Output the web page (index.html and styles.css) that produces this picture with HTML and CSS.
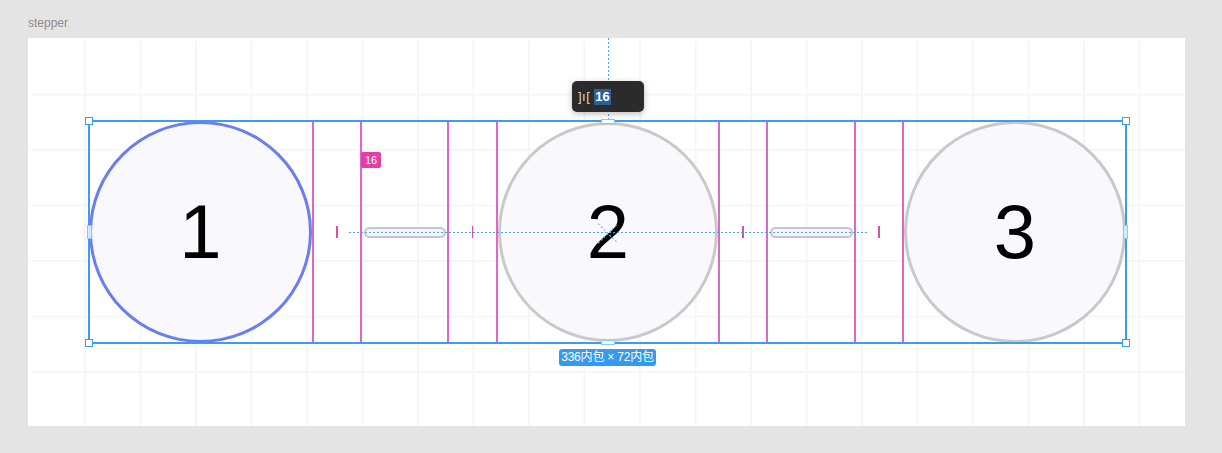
FILE: index.html
```html
<!DOCTYPE html>
<html lang="zh">
<head>
<meta charset="utf-8">
<title>stepper</title>
<link rel="stylesheet" href="styles.css">
</head>
<body>
<div class="frame-label">stepper</div>
<div class="canvas">
  <div class="guide-v"></div>
  <div class="tooltip"><span class="tip-icon">]ı[</span><span class="tip-val">16</span></div>
  <div class="stepper">
    <div class="step active s1"><span>1</span></div>
    <div class="gap g50"><i class="tick"></i></div>
    <div class="conn c85"><div class="pill"></div></div>
    <div class="gap g51"><i class="tick"></i></div>
    <div class="step s2"><span>2</span></div>
    <div class="gap g50"><i class="tick"></i></div>
    <div class="conn c86"><div class="pill"></div></div>
    <div class="gap g50"><i class="tick"></i></div>
    <div class="step s3"><span>3</span></div>

    <div class="guide-h"></div>
    <div class="cross"><i class="d1"></i><i class="d2"></i></div>
    <div class="badge-pink">16</div>
    <div class="selection">
      <i class="h tl"></i><i class="h tr"></i><i class="h bl"></i><i class="h br"></i>
      <i class="m mt"></i><i class="m mb"></i><i class="m ml"></i><i class="m mr"></i>
    </div>
    <div class="size-label">336内包 × 72内包</div>
  </div>
</div>
</body>
</html>
```
FILE: styles.css
```css
* { box-sizing: border-box; }
html, body { margin: 0; padding: 0; }
body {
  background: #e4e4e4;
  width: 1222px;
  height: 453px;
  font-family: "Liberation Sans", Arial, sans-serif;
  overflow: hidden;
}
.frame-label {
  height: 38px;
  padding: 16px 0 0 28px;
  font-size: 12px;
  line-height: 14px;
  color: #8d8d8d;
}
.canvas {
  position: relative;
  margin-left: 28px;
  width: 1157px;
  height: 388px;
  background-color: #ffffff;
  background-image:
    linear-gradient(to right, transparent 0 calc(100% - 2px), #f6f6f6 calc(100% - 2px)),
    linear-gradient(to bottom, transparent 0 calc(100% - 2px), #f6f6f6 calc(100% - 2px));
  background-size: 55.5px 55.5px;
  background-position: 2.5px 2px;
  box-shadow: inset 3px 3px 0 #fff;
  padding: 83px 0 0 61px;
}
.stepper {
  position: relative;
  display: flex;
  align-items: center;
  width: 1037px;
  height: 222px;
}
.step {
  height: 222px;
  border-radius: 50%;
  border: 3px solid #c9c9c9;
  background: #f9f8fd;
  display: flex;
  align-items: center;
  justify-content: center;
  font-size: 76px;
  line-height: 1;
  color: #000;
}
.s1 { flex: 0 0 223px; }
.s2 { flex: 0 0 220px; height: 220px; }
.s3 { flex: 0 0 222px; }
.step.active { border-color: #6a7ef0; }
.gap {
  align-self: stretch;
  border-left: 2px solid #e264c6;
  border-right: 2px solid #e264c6;
  display: flex;
  align-items: center;
  justify-content: center;
}
.g50 { flex: 0 0 50px; }
.g51 { flex: 0 0 51px; }
.tick {
  display: block;
  width: 1.5px;
  height: 12px;
  background: #e04aa8;
}
.conn {
  align-self: stretch;
  display: flex;
  align-items: center;
  padding: 0 1px 0 2px;
}
.c85 { flex: 0 0 85px; }
.c86 { flex: 0 0 86px; }
.pill {
  flex: 1;
  height: 11px;
  border: 2.5px solid #c6c6c9;
  border-radius: 6px;
  background: #f6f6fa;
}
.guide-h {
  position: absolute;
  left: 260px;
  width: 518px;
  top: 110.5px;
  height: 1px;
  background: repeating-linear-gradient(to right, #4aa3f0 0 2px, transparent 2px 4px);
}
.guide-v {
  position: absolute;
  left: 579.5px;
  top: 0;
  width: 1px;
  height: 83px;
  background: repeating-linear-gradient(to bottom, #4aa3f0 0 2px, transparent 2px 4px);
}
.cross {
  position: absolute;
  left: 508px;
  top: 101px;
  width: 22px;
  height: 22px;
}
.cross i {
  position: absolute;
  left: -3px;
  top: 10.5px;
  width: 28px;
  height: 1px;
  background: repeating-linear-gradient(to right, #6fb6f3 0 2px, transparent 2px 4px);
}
.cross .d1 { transform: rotate(45deg); }
.cross .d2 { transform: rotate(-45deg); }
.badge-pink {
  position: absolute;
  left: 272px;
  top: 31px;
  width: 20px;
  height: 16px;
  border-radius: 2px;
  background: #e33ea3;
  color: #fff;
  font-size: 11px;
  line-height: 16px;
  text-align: center;
}
.selection {
  position: absolute;
  left: -1px;
  top: -1px;
  right: -1px;
  bottom: -1px;
  border: 2px solid #3d9cf0;
  pointer-events: none;
}
.selection .h {
  position: absolute;
  width: 8px;
  height: 8px;
  background: #fff;
  border: 1.5px solid #3d9cf0;
}
.selection .tl { left: -5px; top: -5px; }
.selection .tr { right: -5px; top: -5px; }
.selection .bl { left: -5px; bottom: -5px; }
.selection .br { right: -5px; bottom: -5px; }
.selection .m {
  position: absolute;
  background: #fff;
  border: 1px solid #8cc6f6;
}
.selection .mt { left: calc(50% - 7px); top: -3px; width: 14px; height: 5px; }
.selection .mb { left: calc(50% - 7px); bottom: -3px; width: 14px; height: 5px; }
.selection .ml { top: calc(50% - 7px); left: -3px; width: 5px; height: 14px; background: #d4e9fb; }
.selection .mr { top: calc(50% - 7px); right: -3px; width: 5px; height: 14px; background: #d4e9fb; }
.size-label {
  position: absolute;
  left: 470px;
  top: 228px;
  width: 97px;
  height: 17px;
  border-radius: 3px;
  background: #3599ee;
  color: #fff;
  font-size: 12px;
  line-height: 17px;
  text-align: center;
  font-family: "Liberation Sans", "Noto Sans CJK SC", sans-serif;
  white-space: nowrap;
  letter-spacing: -0.2px;
}
.tooltip {
  position: absolute;
  left: 544px;
  top: 43px;
  width: 72px;
  height: 31px;
  border-radius: 5px;
  background: #2b2b2b;
  box-shadow: 0 2px 6px rgba(0,0,0,0.25);
  display: flex;
  align-items: center;
  padding-left: 6px;
  gap: 4px;
  font-size: 13px;
}
.tip-icon { color: #d8d8d8; letter-spacing: 0.5px; }
.tip-val {
  background: #2e5f97;
  color: #fff;
  font-weight: bold;
  padding: 0 1px;
  line-height: 16px;
}
```
